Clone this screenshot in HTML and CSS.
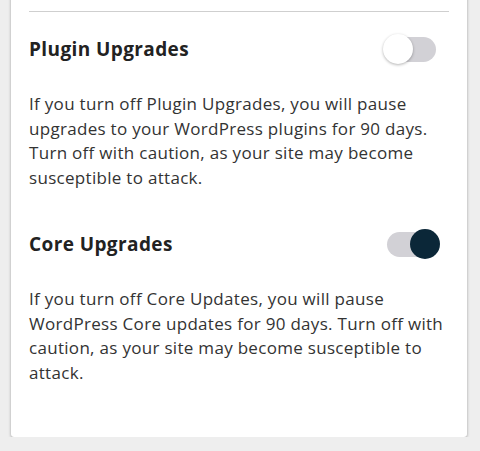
FILE: index.html
```html
<!DOCTYPE html>
<html>
<head>
<meta charset="utf-8">
<link rel="stylesheet" href="styles.css">
</head>
<body>
<div class="card">
  <div class="divider"></div>
  <section class="setting">
    <div class="setting-head">
      <h3 class="setting-title">Plugin Upgrades</h3>
      <span class="toggle"><span class="knob"></span></span>
    </div>
    <p class="setting-desc">If you turn off Plugin Upgrades, you will pause upgrades to your WordPress plugins for 90 days. Turn off with caution, as your site may become susceptible to attack.</p>
  </section>
  <section class="setting">
    <div class="setting-head">
      <h3 class="setting-title">Core Upgrades</h3>
      <span class="toggle on"><span class="knob"></span></span>
    </div>
    <p class="setting-desc">If you turn off Core Updates, you will pause WordPress Core updates for 90 days. Turn off with caution, as your site may become susceptible to attack.</p>
  </section>
</div>
</body>
</html>
```

FILE: styles.css
```css
html, body {
  margin: 0;
  padding: 0;
  background: #eeeeee;
}
body {
  font-family: "Open Sans", "Noto Sans", sans-serif;
  color: #333;
}
.card {
  margin: -20px 0 0 11px;
  width: 456px;
  background: #fff;
  border-radius: 3px;
  box-shadow: 0 1px 3px rgba(0,0,0,0.35);
  padding: 31px 18px 24px;
  box-sizing: border-box;
}
.divider {
  height: 1px;
  background: #cfcfcf;
  margin-bottom: 21px;
}
.setting-head {
  display: flex;
  align-items: center;
  justify-content: space-between;
  height: 32px;
}
.setting-title {
  margin: 0;
  font-size: 19px;
  font-weight: 700;
  letter-spacing: 0.4px;
  color: #222;
}
.toggle {
  position: relative;
  width: 49px;
  height: 25px;
  border-radius: 13px;
  background: #d2d1d6;
  margin-right: 13px;
}
.knob {
  position: absolute;
  top: -3px;
  left: -4px;
  width: 30px;
  height: 30px;
  border-radius: 50%;
  background: #fff;
  box-shadow: 0 1px 3px rgba(0,0,0,0.3);
}
.toggle.on .knob {
  left: 23px;
  background: #0b2738;
  box-shadow: none;
}
.setting-desc {
  margin: 27px 0 38px;
  font-size: 17px;
  letter-spacing: 0.3px;
  line-height: 24.5px;
  color: #333;
}
.setting:last-child .setting-desc {
  margin-bottom: 28px;
}
```
